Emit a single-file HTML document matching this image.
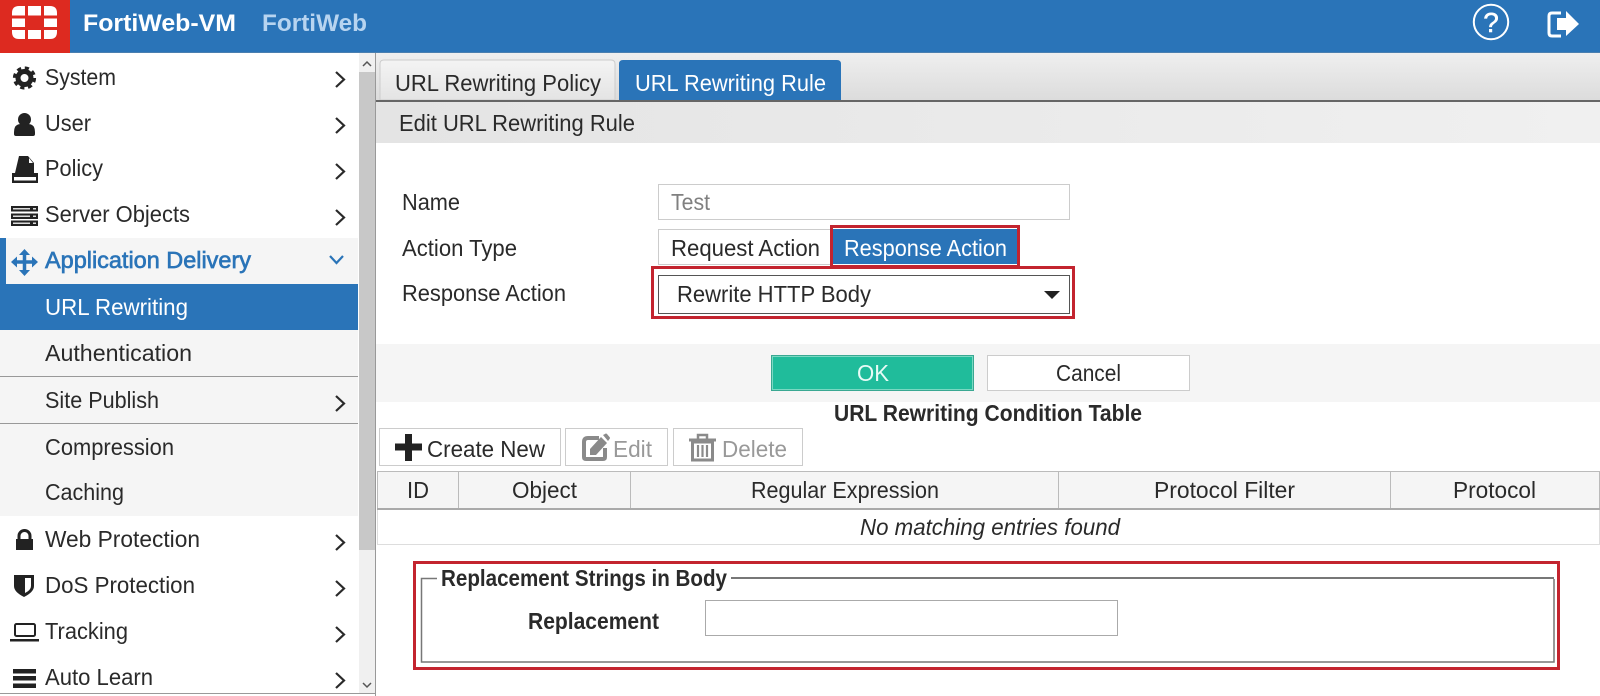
<!DOCTYPE html>
<html lang="en"><head><meta charset="utf-8"><title>FortiWeb-VM</title>
<style>
html,body{margin:0;padding:0;background:#fff;width:1600px;height:696px;overflow:hidden}
svg{display:block}
text{font-family:"Liberation Sans",sans-serif;font-size:23px;fill:#2a2a2a;transform:translateY(-1px)}
text.k{transform:none}
.b{font-weight:bold}
.chev{fill:none;stroke:#2a2a2a;stroke-width:2.2}
</style></head><body>
<svg xmlns="http://www.w3.org/2000/svg" width="1600" height="696" viewBox="0 0 1600 696">
<defs>
<linearGradient id="tb" x1="0" y1="0" x2="0" y2="1"><stop offset="0" stop-color="#efefef"/><stop offset="1" stop-color="#dcdcdc"/></linearGradient>
<linearGradient id="tab" x1="0" y1="0" x2="0" y2="1"><stop offset="0" stop-color="#f4f4f4"/><stop offset="1" stop-color="#e4e4e4"/></linearGradient>
<linearGradient id="ed" x1="0" y1="0" x2="1" y2="0"><stop offset="0" stop-color="#e4e4e4"/><stop offset="1" stop-color="#f0f0f0"/></linearGradient>
</defs>

<!-- header -->
<rect x="0" y="0" width="1600" height="53" fill="#2a74b8"/>
<rect x="0" y="52" width="1600" height="1" fill="#4a7fb0"/>
<rect x="0" y="0" width="70" height="53" fill="#dd2a20"/>
<g fill="#fff">
<path d="M12 15.500V13q0-7 7-7h6v9.500z"/><rect x="28" y="6" width="13" height="9.500"/><path d="M44 6h6q7 0 7 7v2.500H44z"/>
<rect x="12" y="18.500" width="13" height="8.500"/><rect x="44" y="18.500" width="13" height="8.500"/>
<path d="M12 30h13v9h-6q-7 0-7-7z"/><rect x="28" y="30" width="13" height="9"/><path d="M44 30h13v2q0 7-7 7h-6z"/>
</g>
<text class="k b" x="83" y="31" textLength="153" lengthAdjust="spacingAndGlyphs" style="font-size:24px;fill:#fff">FortiWeb-VM</text>
<text class="k b" x="262" y="31" textLength="105" lengthAdjust="spacingAndGlyphs" style="font-size:24px;fill:#b7d4f0">FortiWeb</text>
<circle cx="1491" cy="22" r="17.200" fill="none" stroke="#fff" stroke-width="2"/>
<text class="k" x="1491" y="32" text-anchor="middle" style="font-size:28px;fill:#fff;stroke:#fff;stroke-width:.5">?</text>
<path d="M1561 13h-9q-3 0-3 3v17q0 3 3 3h9" fill="none" stroke="#fff" stroke-width="3"/>
<path d="M1557 18h9v-7l13 13-13 12v-6h-9z" fill="#fff"/>

<!-- sidebar -->
<rect x="0" y="238" width="358" height="278" fill="#f5f5f5"/>
<rect x="0" y="238" width="6" height="46" fill="#2a74b8"/>
<rect x="0" y="284" width="358" height="46" fill="#2a74b8"/>
<rect x="0" y="376" width="358" height="1" fill="#999"/>
<rect x="0" y="423" width="358" height="1" fill="#999"/>
<rect x="359" y="53" width="16" height="640" fill="#f0f0f0"/>
<rect x="359" y="72" width="16" height="478" fill="#c8c8c8"/>
<path d="M363 66l4-4 4 4M363 683l4 4 4-4" fill="none" stroke="#555" stroke-width="1.500"/>
<rect x="375" y="53" width="1" height="643" fill="#999"/>
<rect x="0" y="693" width="375" height="1" fill="#999"/>

<text x="45" y="86" textLength="71" lengthAdjust="spacingAndGlyphs">System</text>
<text x="45" y="132" textLength="46" lengthAdjust="spacingAndGlyphs">User</text>
<text x="45" y="177" textLength="58" lengthAdjust="spacingAndGlyphs">Policy</text>
<text x="45" y="223" textLength="145" lengthAdjust="spacingAndGlyphs">Server Objects</text>
<text x="45" y="269" textLength="206" lengthAdjust="spacingAndGlyphs" style="fill:#2a74b8;stroke:#2a74b8;stroke-width:.65">Application Delivery</text>
<text x="45" y="316" textLength="143" lengthAdjust="spacingAndGlyphs" style="fill:#fff">URL Rewriting</text>
<text x="45" y="362" textLength="147" lengthAdjust="spacingAndGlyphs">Authentication</text>
<text x="45" y="409" textLength="114" lengthAdjust="spacingAndGlyphs">Site Publish</text>
<text x="45" y="456" textLength="129" lengthAdjust="spacingAndGlyphs">Compression</text>
<text x="45" y="501" textLength="79" lengthAdjust="spacingAndGlyphs">Caching</text>
<text x="45" y="548" textLength="155" lengthAdjust="spacingAndGlyphs">Web Protection</text>
<text x="45" y="594" textLength="150" lengthAdjust="spacingAndGlyphs">DoS Protection</text>
<text x="45" y="640" textLength="83" lengthAdjust="spacingAndGlyphs">Tracking</text>
<text x="45" y="686" textLength="108" lengthAdjust="spacingAndGlyphs">Auto Learn</text>

<g class="chev">
<path d="M336 72l8 7.500-8 7.500"/><path d="M336 118l8 7.500-8 7.500"/><path d="M336 164l8 7.500-8 7.500"/><path d="M336 210l8 7.500-8 7.500"/>
<path d="M336 396l8 7.500-8 7.500"/><path d="M336 535l8 7.500-8 7.500"/><path d="M336 581l8 7.500-8 7.500"/><path d="M336 627l8 7.500-8 7.500"/><path d="M336 673l8 7.500-8 7.500"/>
</g>
<path d="M330 256l6.500 7 6.500-7" fill="none" stroke="#2a74b8" stroke-width="2.200"/>

<!-- sidebar icons -->
<circle cx="24.500" cy="78" r="6.500" fill="none" stroke="#222" stroke-width="5"/>
<circle cx="24.500" cy="78" r="10" fill="none" stroke="#222" stroke-width="3.200" stroke-dasharray="4.200 3.650"/>
<circle cx="24.500" cy="119.500" r="6.500" fill="#222"/>
<path d="M14 134v-2q0-8 7-8h7q7 0 7 8v2q0 2-2 2H16q-2 0-2-2z" fill="#222"/>
<path d="M19 156h9l6 7v10H15z" fill="#222"/><path d="M29 158v5h4z" fill="#fff"/>
<rect x="12" y="173" width="26" height="10" fill="#222"/><rect x="14" y="177" width="22" height="3.500" fill="#fff"/>
<g fill="#222"><rect x="11" y="206" width="27" height="5.500"/><rect x="11" y="213.500" width="27" height="5.500"/><rect x="11" y="220.500" width="27" height="5.500"/></g>
<g fill="#ddd"><rect x="13" y="208" width="17" height="1.500"/><rect x="13" y="215.500" width="17" height="1.500"/><rect x="13" y="222.500" width="17" height="1.500"/><rect x="33" y="208" width="3" height="1.500"/><rect x="33" y="215.500" width="3" height="1.500"/><rect x="33" y="222.500" width="3" height="1.500"/></g>
<path d="M24.500 252v20M15 262h19" stroke="#2a74b8" stroke-width="3.500" fill="none"/>
<path d="M24.500 249l5.500 6h-11zM24.500 276l5.500-6h-11zM11 262l6-5.500v11zM38 262l-6-5.500v11z" fill="#2a74b8"/>
<rect x="16" y="539" width="17" height="11" fill="#222"/>
<path d="M19 540v-4a5.500 5.500 0 0 1 11 0v4" fill="none" stroke="#222" stroke-width="3"/>
<path d="M14 575h20v11q0 6-10 11q-10-5-10-11z" fill="#222"/>
<path d="M25 578h6v8q0 4-6 7z" fill="#fff"/>
<rect x="15" y="624" width="20" height="12" rx="1.500" fill="none" stroke="#222" stroke-width="2"/>
<rect x="10" y="639" width="29" height="2.500" fill="#222"/>
<g fill="#222"><rect x="13" y="669" width="23" height="4.500"/><rect x="13" y="676" width="23" height="4.500"/><rect x="13" y="683.500" width="23" height="4.500"/></g>

<!-- tabs -->
<rect x="376" y="53" width="1224" height="47" fill="url(#tb)"/>
<path d="M380 100V64q0-4 4-4h227q4 0 4 4v36z" fill="url(#tab)" stroke="#ccc" stroke-width="1"/>
<path d="M619 100V64q0-4 4-4h214q4 0 4 4v36z" fill="#2a74b8"/>
<text x="395" y="92" textLength="206" lengthAdjust="spacingAndGlyphs">URL Rewriting Policy</text>
<text x="635" y="92" textLength="191" lengthAdjust="spacingAndGlyphs" style="fill:#fff">URL Rewriting Rule</text>
<rect x="376" y="100" width="1224" height="2" fill="#666"/>
<rect x="376" y="102" width="1224" height="41" fill="url(#ed)"/>
<text x="399" y="132" textLength="236" lengthAdjust="spacingAndGlyphs">Edit URL Rewriting Rule</text>

<!-- form -->
<text x="402" y="211" textLength="58" lengthAdjust="spacingAndGlyphs">Name</text>
<text class="k" x="402" y="256" textLength="115" lengthAdjust="spacingAndGlyphs">Action Type</text>
<text x="402" y="302" textLength="164" lengthAdjust="spacingAndGlyphs">Response Action</text>
<rect x="658.500" y="184.500" width="411" height="35" fill="#fff" stroke="#ccc"/>
<text x="671" y="210" textLength="39" lengthAdjust="spacingAndGlyphs" class="k" style="fill:#808080">Test</text>
<rect x="658.500" y="229.500" width="175" height="35" fill="#fff" stroke="#ccc"/>
<text class="k" x="671" y="256" textLength="149" lengthAdjust="spacingAndGlyphs">Request Action</text>
<rect x="831.500" y="226.500" width="187" height="40" fill="#fff"/>
<rect x="833" y="229" width="184" height="35" fill="#2a74b8"/>
<rect x="831.500" y="226.500" width="187" height="40" fill="none" stroke="#c3242f" stroke-width="3"/>
<text class="k" x="844" y="256" textLength="163" lengthAdjust="spacingAndGlyphs" style="fill:#fff">Response Action</text>
<rect x="652.500" y="267.500" width="421" height="50" fill="#fff" stroke="#c3242f" stroke-width="3"/>
<rect x="658.500" y="275.500" width="411" height="38" fill="#fff" stroke="#555"/>
<text class="k" x="677" y="302" textLength="194" lengthAdjust="spacingAndGlyphs">Rewrite HTTP Body</text>
<path d="M1044 291h16l-8 8z" fill="#222"/>

<!-- buttons band -->
<rect x="376" y="344" width="1224" height="58" fill="#f5f5f5"/>
<rect x="771.500" y="355.500" width="202" height="35" fill="#20bc9b" stroke="#3aa892"/>
<rect x="772.500" y="356.500" width="200" height="33" fill="none" stroke="#7ad8c2"/>
<text class="k" x="857" y="381" textLength="32" lengthAdjust="spacingAndGlyphs" style="fill:#e8fbf6">OK</text>
<rect x="987.500" y="355.500" width="202" height="35" fill="#fff" stroke="#ccc"/>
<text x="1056" y="382" textLength="65" lengthAdjust="spacingAndGlyphs">Cancel</text>
<text x="834" y="422" textLength="308" lengthAdjust="spacingAndGlyphs" class="b">URL Rewriting Condition Table</text>

<!-- toolbar -->
<rect x="379.500" y="428.500" width="181" height="37" fill="#fff" stroke="#ccc"/>
<rect x="565.500" y="428.500" width="102" height="37" fill="#fff" stroke="#ccc"/>
<rect x="673.500" y="428.500" width="129" height="37" fill="#fff" stroke="#ccc"/>
<path d="M395 447h27M408.500 434v27" stroke="#222" stroke-width="7" fill="none"/>
<text class="k" x="427" y="457" textLength="118" lengthAdjust="spacingAndGlyphs">Create New</text>
<path d="M599 438h-11q-4 0-4 4v15q0 2 2 2h17q2 0 2-2v-9" fill="none" stroke="#8a8a8a" stroke-width="4"/>
<path d="M590 455v-6l11-12 6 6-11 12z" fill="#8a8a8a"/>
<path d="M603 435l2-1q1-1 2 0l2.500 3q1 1 0 2l-1.500 2z" fill="#8a8a8a"/>
<text class="k" x="613" y="457" textLength="39" lengthAdjust="spacingAndGlyphs" style="fill:#999">Edit</text>
<path d="M689 440h27" stroke="#8a8a8a" stroke-width="3"/>
<path d="M698 439v-4h9v4" fill="none" stroke="#8a8a8a" stroke-width="2.500"/>
<rect x="692.500" y="442" width="20" height="18" fill="none" stroke="#8a8a8a" stroke-width="3"/>
<path d="M698 445v12M702.500 445v12M707 445v12" stroke="#8a8a8a" stroke-width="2.200"/>
<text class="k" x="722" y="457" textLength="65" lengthAdjust="spacingAndGlyphs" style="fill:#999">Delete</text>

<!-- table -->
<rect x="377.500" y="471.500" width="1222" height="37" fill="#f5f5f5" stroke="#bbb"/>
<rect x="377" y="508" width="1223" height="2" fill="#aaa"/>
<rect x="458" y="472" width="1" height="36" fill="#bbb"/>
<rect x="630" y="472" width="1" height="36" fill="#bbb"/>
<rect x="1058" y="472" width="1" height="36" fill="#bbb"/>
<rect x="1390" y="472" width="1" height="36" fill="#bbb"/>
<text x="407" y="499" textLength="22" lengthAdjust="spacingAndGlyphs">ID</text>
<text x="512" y="499" textLength="65" lengthAdjust="spacingAndGlyphs">Object</text>
<text x="751" y="499" textLength="188" lengthAdjust="spacingAndGlyphs">Regular Expression</text>
<text x="1154" y="499" textLength="141" lengthAdjust="spacingAndGlyphs">Protocol Filter</text>
<text x="1453" y="499" textLength="83" lengthAdjust="spacingAndGlyphs">Protocol</text>
<rect x="377" y="510" width="1" height="34" fill="#ddd"/>
<rect x="1599" y="510" width="1" height="34" fill="#ddd"/>
<rect x="377" y="544" width="1223" height="1" fill="#ddd"/>
<text x="860" y="536" textLength="260" lengthAdjust="spacingAndGlyphs" style="font-style:italic">No matching entries found</text>

<!-- replacement box -->
<rect x="414.500" y="562.500" width="1144" height="106" fill="#fff" stroke="#c3242f" stroke-width="3"/>
<path d="M437 578.500H421.500V662H1554V579" fill="none" stroke="#777" stroke-width="1.500"/>
<path d="M731 578H1554" stroke="#777" stroke-width="2"/>
<text x="441" y="587" textLength="286" lengthAdjust="spacingAndGlyphs" class="b">Replacement Strings in Body</text>
<text x="528" y="629" textLength="131" lengthAdjust="spacingAndGlyphs" class="k b">Replacement</text>
<rect x="705.500" y="600.500" width="412" height="35" fill="#fff" stroke="#aaa"/>
</svg>
</body></html>
